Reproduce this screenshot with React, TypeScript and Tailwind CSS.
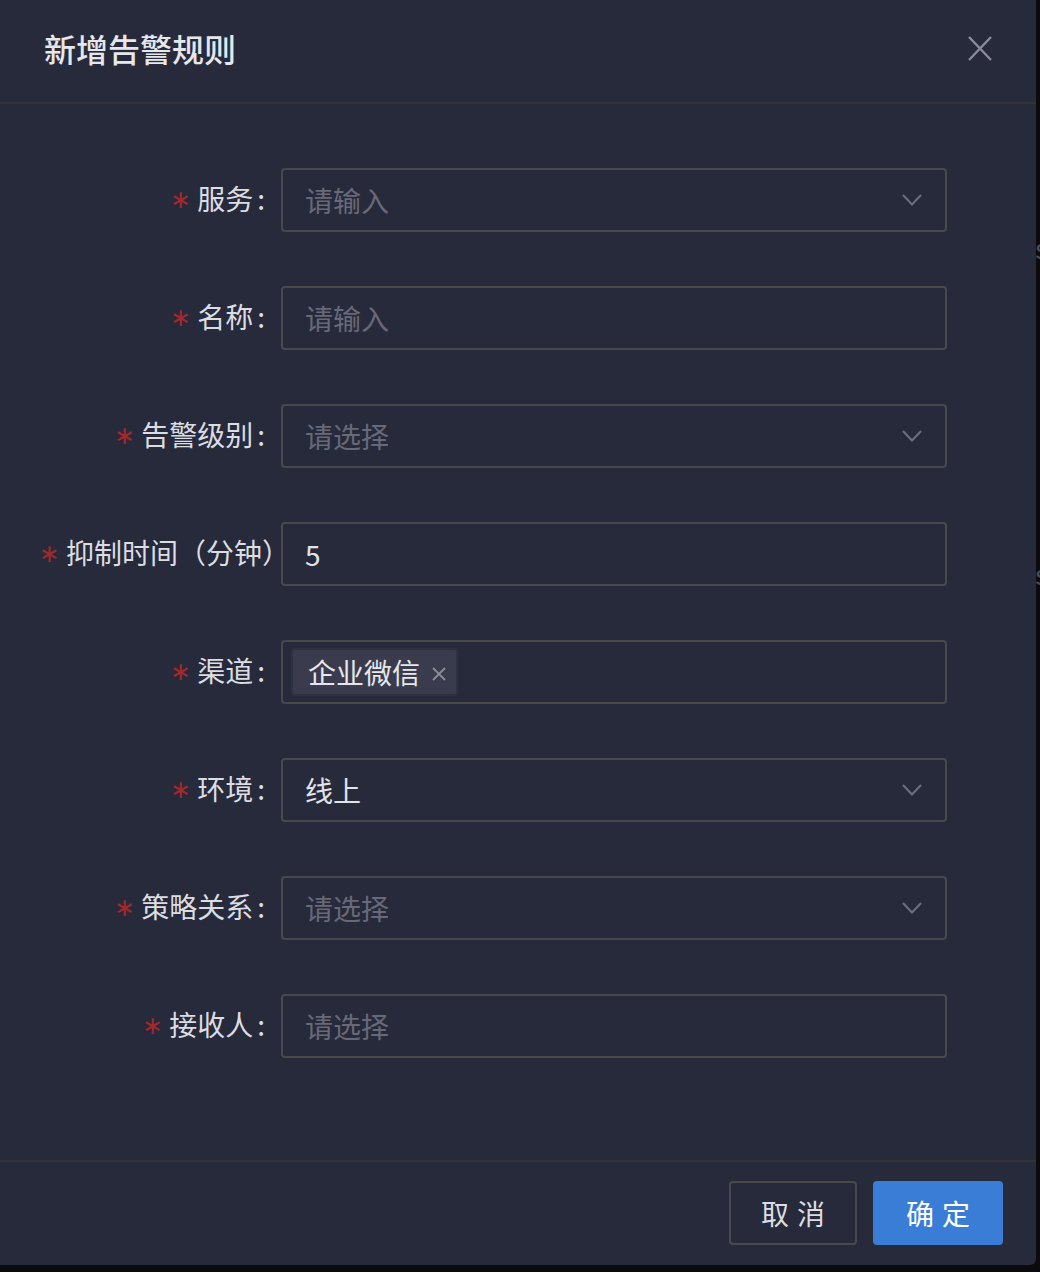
import React from "react";

const font = { fontFamily: '"Noto Sans CJK SC", "Noto Sans", sans-serif' };

function Chevron() {
  return (
    <svg width="20" height="12" viewBox="0 0 20 12" className="shrink-0">
      <path d="M1 1 L10 10.5 L19 1" fill="none" stroke="#6d6f80" strokeWidth="2" />
    </svg>
  );
}

function Label({ text, colon = true }: { text: string; colon?: boolean }) {
  return (
    <div className="w-[241px] shrink-0 overflow-hidden whitespace-nowrap text-right text-[28px] leading-[64px] text-[#dcdde2]">
      <span className="inline-block w-[26px] text-left">
        <span
          className="text-[#a3282b] text-[25px] relative -top-[2px] -left-[1px]"
          style={{ fontFamily: '"DejaVu Sans", sans-serif' }}
        >
          ∗
        </span>
      </span>
      <span>{text}</span>
      {colon && <span className="ml-[4px] mr-[16px]">:</span>}
    </div>
  );
}

function Field({
  label,
  colon = true,
  children,
  select = false,
}: {
  label: string;
  colon?: boolean;
  children: React.ReactNode;
  select?: boolean;
}) {
  return (
    <div className="flex items-center h-[64px]">
      <Label text={label} colon={colon} />
      <div className="relative w-[666px] h-[64px] border-2 border-[#48494f] rounded-[4px] flex items-center pl-[22px] pr-[23px] bg-[#272a3b]">
        <div className="flex-1 flex items-center text-[28px]">{children}</div>
        {select && <Chevron />}
      </div>
    </div>
  );
}

const Placeholder = ({ t }: { t: string }) => <span className="text-[#676978]">{t}</span>;
const Value = ({ t }: { t: string }) => <span className="text-[#e2e3e8]">{t}</span>;

export default function App() {
  return (
    <div className="relative w-[1040px] h-[1272px] bg-[#0b0b0e] overflow-hidden" style={font}>
      <span className="absolute left-[1035px] top-[226px] text-[28px] text-[#4a4b52]">s</span>
      <span className="absolute left-[1035px] top-[552px] text-[28px] text-[#4a4b52]">s</span>
      <div className="relative w-[1036px] h-[1265px] bg-[#272a3b] rounded-br-[6px] flex flex-col">
        <div className="h-[104px] border-b-2 border-[#333336] flex items-center justify-between pl-[44px] pr-[44px] pb-[6px] shrink-0">
          <div className="text-[32px] font-medium text-[#e6e7eb]">新增告警规则</div>
          <svg width="24" height="25" viewBox="0 0 24 25">
            <path d="M1 1 L23 24 M23 1 L1 24" stroke="#8a8b98" strokeWidth="2.4" fill="none" />
          </svg>
        </div>
        <div className="flex-1 flex flex-col gap-[54px] pt-[64px] pl-[40px]">
          <Field label="服务" select>
            <Placeholder t="请输入" />
          </Field>
          <Field label="名称">
            <Placeholder t="请输入" />
          </Field>
          <Field label="告警级别" select>
            <Placeholder t="请选择" />
          </Field>
          <Field label="抑制时间（分钟）" colon={false}>
            <Value t="5" />
          </Field>
          <div className="flex items-center h-[64px]">
            <Label text="渠道" />
            <div className="w-[666px] h-[64px] border-2 border-[#48494f] rounded-[4px] flex items-center pl-[8px]">
              <div className="h-[48px] flex items-center bg-[#3a3c4d] border-2 border-[#2f3040] rounded-[3px] pl-[15px] pr-[10px]">
                <span className="text-[28px] text-[#e6e7ec] leading-none">企业微信</span>
                <svg width="14" height="14" viewBox="0 0 14 14" className="ml-[12px] mt-[4px]">
                  <path d="M1 1 L13 13 M13 1 L1 13" stroke="#8b8c98" strokeWidth="1.8" fill="none" />
                </svg>
              </div>
            </div>
          </div>
          <Field label="环境" select>
            <Value t="线上" />
          </Field>
          <Field label="策略关系" select>
            <Placeholder t="请选择" />
          </Field>
          <Field label="接收人">
            <Placeholder t="请选择" />
          </Field>
        </div>
        <div className="h-[105px] shrink-0 border-t-2 border-[#333336] flex items-center justify-end gap-[16px] pr-[33px] pb-[1px]">
          <button className="w-[128px] h-[64px] border-2 border-[#48494f] rounded-[4px] text-[28px] text-[#dcdde2] tracking-[8px] pl-[8px]">
            取消
          </button>
          <button className="w-[130px] h-[64px] rounded-[4px] bg-[#3a7dd6] text-[28px] text-white tracking-[8px] pl-[8px]">
            确定
          </button>
        </div>
      </div>
    </div>
  );
}
